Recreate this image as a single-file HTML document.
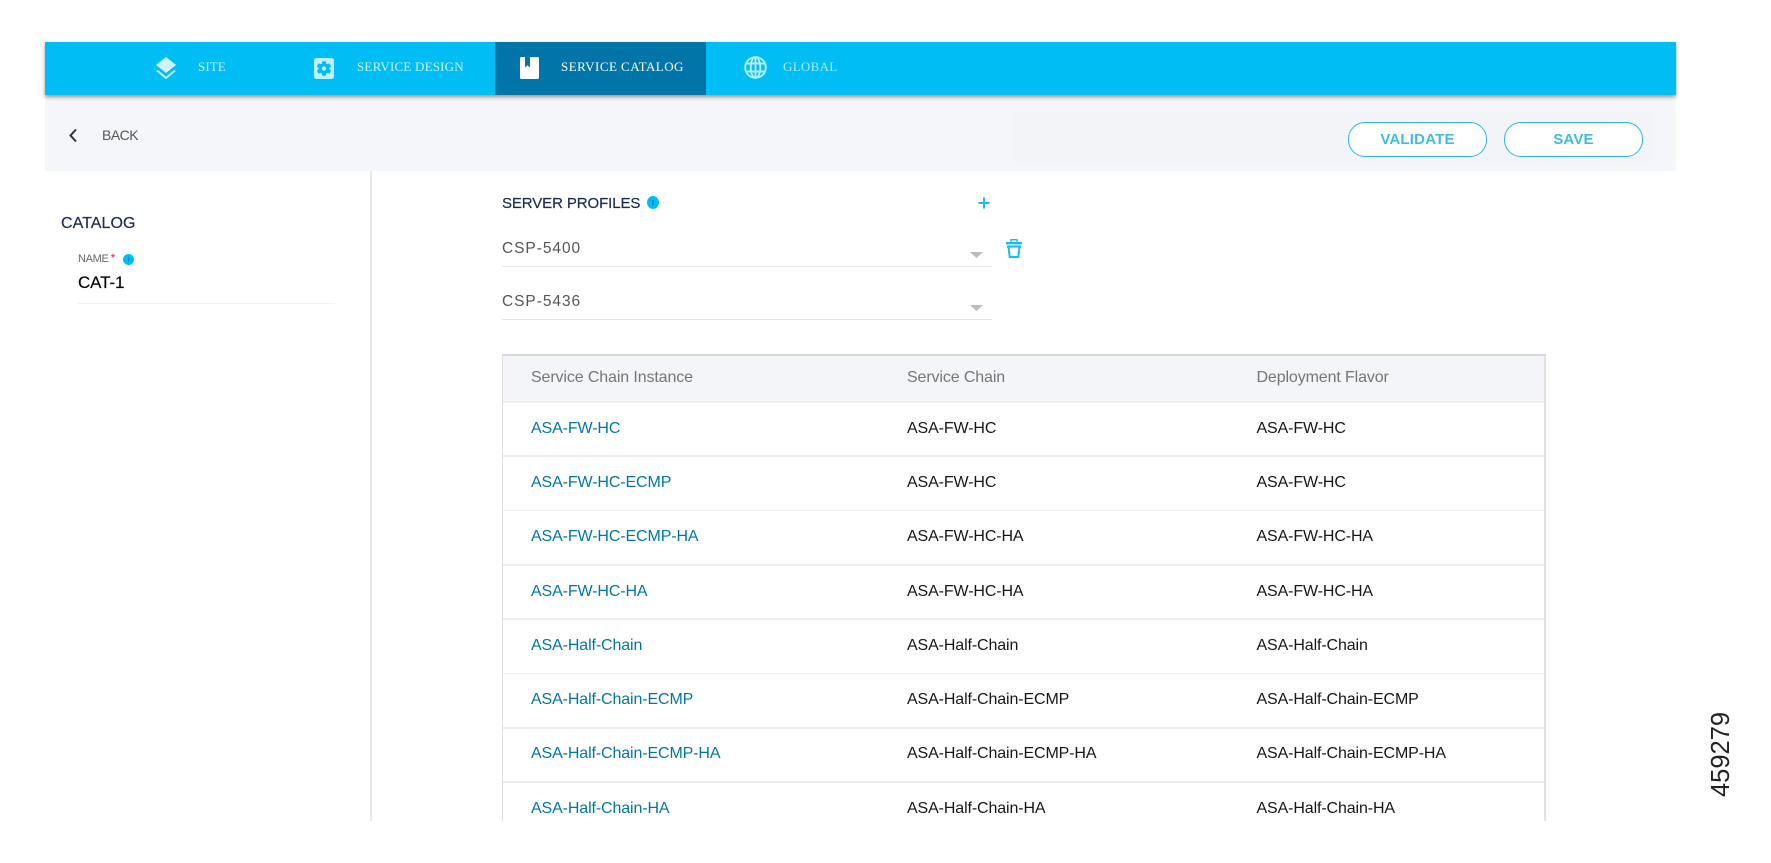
<!DOCTYPE html>
<html><head><meta charset="utf-8"><title>Service Catalog</title>
<style>
html,body{margin:0;padding:0;background:#fff}
body{width:1771px;height:863px;position:relative;overflow:hidden;font-family:"Liberation Sans",sans-serif}
.a{position:absolute;white-space:nowrap}
.b{position:absolute}
.t{height:20px;line-height:20px}
.nav{font-family:"Liberation Serif",serif;font-size:13px;color:#c8f2fd;top:57px}
.lnk{color:#0176a6}.cell{color:#161616}
.t,.hd{font-size:16px;letter-spacing:-.12px}
.hd{color:#757575;height:20px;line-height:20px;position:absolute;white-space:nowrap}
.sep{position:absolute;left:503px;width:1041px;background:#ededed}
.btn{position:absolute;top:122px;width:137px;height:33px;border:1.5px solid #2fb6de;border-radius:17px;background:#fff;color:#3fbce2;font-weight:bold;font-size:15px;line-height:33px;text-align:center;letter-spacing:.2px}
.dd{font-size:15.5px;letter-spacing:.95px;color:#555;height:20px;line-height:20px}
.dot{position:absolute;border-radius:50%;background:#00bef4}
.dot i{position:absolute;left:50%;top:50%;width:1.4px;height:5px;margin:-2.5px 0 0 -.7px;background:#0a86b8}
</style></head><body>

<div class="b" style="left:45px;top:95px;width:1631px;height:76px;background:#f4f6fa"></div>
<div class="b" style="left:1014px;top:113px;width:638px;height:49px;background:#f3f4f8"></div>
<div class="b" style="left:45px;top:42px;width:1631px;height:53px;background:#00bef4;box-shadow:0 2px 4px rgba(0,0,0,.4)"></div>
<div class="b" style="left:495px;top:42px;width:211px;height:53px;background:#0175a8"></div>

<svg class="b" style="left:155px;top:56px" width="22" height="24" viewBox="0 0 22 24"><path d="M11 1 L21 9 L11 17 L1 9Z" fill="#cdf3fd"/><path d="M2 14.5 L11 22 L20 14.5" fill="none" stroke="#cdf3fd" stroke-width="2"/></svg>
<div class="a nav" style="left:198px;letter-spacing:.1px;line-height:20px">SITE</div>

<svg class="b" style="left:314px;top:58px" width="20" height="21" viewBox="0 0 20 21"><rect width="20" height="21" rx="2.5" fill="#bff0fc"/><g fill="#00bef4"><circle cx="10" cy="10.5" r="5.4"/><rect x="8" y="3.2" width="4" height="14.6" rx="1"/><rect x="8" y="3.2" width="4" height="14.6" rx="1" transform="rotate(60 10 10.5)"/><rect x="8" y="3.2" width="4" height="14.6" rx="1" transform="rotate(120 10 10.5)"/></g><circle cx="10" cy="10.5" r="2.2" fill="#bff0fc"/></svg>
<div class="a nav" style="left:357px;letter-spacing:.2px;line-height:20px">SERVICE DESIGN</div>

<svg class="b" style="left:520px;top:57px" width="19" height="22" viewBox="0 0 19 22"><path d="M1.5 0H17.5Q19 0 19 1.5V20.5Q19 22 17.5 22H1.5Q0 22 0 20.5V1.500Q0 0 1.500 0Z" fill="#fff"/><path d="M5 0H10V10.500L7.500 8.300L5 10.500Z" fill="#0175a8"/></svg>
<div class="a nav" style="left:561px;color:#fff;letter-spacing:.46px;line-height:20px">SERVICE CATALOG</div>

<svg class="b" style="left:744px;top:56px" width="23" height="23" viewBox="0 0 23 23" fill="none" stroke="#b5edfb" stroke-width="1.900"><circle cx="11.500" cy="11.500" r="10.300"/><ellipse cx="11.500" cy="11.500" rx="4.800" ry="10.300"/><path d="M2.500 7.500H20.500M2.500 15.500H20.500M11.500 1.200V21.800"/></svg>
<div class="a nav" style="left:783px;color:#a9e9fa;letter-spacing:.3px;line-height:20px">GLOBAL</div>

<svg class="b" style="left:68px;top:128px" width="10" height="15" viewBox="0 0 10 15"><path d="M8 1.500 L2.500 7.500 L8 13.500" fill="none" stroke="#333" stroke-width="2"/></svg>
<div class="a" style="left:102px;top:125px;font-size:14px;letter-spacing:-.5px;color:#555;line-height:20px">BACK</div>

<div class="btn" style="left:1348px">VALIDATE</div>
<div class="btn" style="left:1504px">SAVE</div>

<div class="a" style="left:61px;top:214px;font-size:16px;color:#1b2c4f;line-height:20px;letter-spacing:.05px;-webkit-text-stroke:.2px #1b2c4f">CATALOG</div>
<div class="a" style="left:78px;top:250px;font-size:11px;color:#666;line-height:16px;letter-spacing:-.3px">NAME<span style="color:#e2165a;margin-left:2px;font-size:12px">*</span></div>
<div class="dot" style="left:123px;top:254px;width:11px;height:11px"><i></i></div>
<div class="a" style="left:78px;top:272px;font-size:17px;color:#000;line-height:22px;letter-spacing:-.1px;-webkit-text-stroke:.15px #000">CAT-1</div>
<div class="b" style="left:78px;top:303px;width:257px;height:1px;background:#f1f1f1"></div>

<div class="b" style="left:370px;top:171px;width:2px;height:650px;background:#e8e8e8"></div>

<div class="a" style="left:502px;top:194px;font-size:15px;color:#1b2c4f;line-height:20px;letter-spacing:-.1px;-webkit-text-stroke:.2px #1b2c4f">SERVER PROFILES</div>
<div class="dot" style="left:647px;top:196px;width:12px;height:13px"><i></i></div>
<svg class="b" style="left:978px;top:197px" width="12" height="12" viewBox="0 0 12 12"><path d="M6 0.500V11.500M0.500 6H11.500" stroke="#1cbfe8" stroke-width="2"/></svg>

<div class="a dd" style="left:502px;top:239px">CSP-5400</div>
<div class="b" style="left:502px;top:266px;width:490px;height:1px;background:#e6e6e6"></div>
<svg class="b" style="left:970px;top:252px" width="13" height="6" viewBox="0 0 13 6"><path d="M0 0H13L6.500 6Z" fill="#bcbcbc"/></svg>
<svg class="b" style="left:1006px;top:239px" width="16" height="19" viewBox="0 0 16 19" fill="none" stroke="#18bdec"><rect x="5" y="0.700" width="6" height="3" stroke-width="1.400"/><rect x="0" y="3" width="16" height="2.400" fill="#18bdec" stroke="none"/><rect x="1" y="6.400" width="14" height="2.200" fill="#18bdec" stroke="none"/><path d="M2.500 7.500L3.700 18H12.300L13.500 7.500" stroke-width="2"/></svg>

<div class="a dd" style="left:502px;top:292px">CSP-5436</div>
<div class="b" style="left:502px;top:319px;width:490px;height:1px;background:#e6e6e6"></div>
<svg class="b" style="left:970px;top:305px" width="13" height="6" viewBox="0 0 13 6"><path d="M0 0H13L6.500 6Z" fill="#bcbcbc"/></svg>

<!-- table -->
<div class="b" style="left:503px;top:355px;width:1041px;height:47px;background:#f3f5f9"></div>
<div class="b" style="left:502px;top:354px;width:1px;height:467px;background:#e0e0e0"></div>
<div class="b" style="left:1544px;top:354px;width:2px;height:467px;background:#e2e2e2"></div>
<div class="b" style="left:502px;top:354px;width:1044px;height:2px;background:#d8d8d8"></div>
<div class="sep" style="top:401px;height:2px"></div>
<div class="sep" style="top:455px;height:2px"></div>
<div class="sep" style="top:510px;height:1px"></div>
<div class="sep" style="top:564px;height:2px"></div>
<div class="sep" style="top:618px;height:2px"></div>
<div class="sep" style="top:673px;height:1px"></div>
<div class="sep" style="top:727px;height:2px"></div>
<div class="sep" style="top:781px;height:2px"></div>

<div class="hd" style="left:531px;top:368px">Service Chain Instance</div>
<div class="hd" style="left:907px;top:368px">Service Chain</div>
<div class="hd" style="left:1256.500px;top:368px">Deployment Flavor</div>

<div class="a t lnk" style="left:531px;top:419px">ASA-FW-HC</div>
<div class="a t cell" style="left:907px;top:419px">ASA-FW-HC</div>
<div class="a t cell" style="left:1256.500px;top:419px">ASA-FW-HC</div>

<div class="a t lnk" style="left:531px;top:473px">ASA-FW-HC-ECMP</div>
<div class="a t cell" style="left:907px;top:473px">ASA-FW-HC</div>
<div class="a t cell" style="left:1256.500px;top:473px">ASA-FW-HC</div>

<div class="a t lnk" style="left:531px;top:527px">ASA-FW-HC-ECMP-HA</div>
<div class="a t cell" style="left:907px;top:527px">ASA-FW-HC-HA</div>
<div class="a t cell" style="left:1256.500px;top:527px">ASA-FW-HC-HA</div>

<div class="a t lnk" style="left:531px;top:582px">ASA-FW-HC-HA</div>
<div class="a t cell" style="left:907px;top:582px">ASA-FW-HC-HA</div>
<div class="a t cell" style="left:1256.500px;top:582px">ASA-FW-HC-HA</div>

<div class="a t lnk" style="left:531px;top:636px">ASA-Half-Chain</div>
<div class="a t cell" style="left:907px;top:636px">ASA-Half-Chain</div>
<div class="a t cell" style="left:1256.500px;top:636px">ASA-Half-Chain</div>

<div class="a t lnk" style="left:531px;top:690px">ASA-Half-Chain-ECMP</div>
<div class="a t cell" style="left:907px;top:690px">ASA-Half-Chain-ECMP</div>
<div class="a t cell" style="left:1256.500px;top:690px">ASA-Half-Chain-ECMP</div>

<div class="a t lnk" style="left:531px;top:744px">ASA-Half-Chain-ECMP-HA</div>
<div class="a t cell" style="left:907px;top:744px">ASA-Half-Chain-ECMP-HA</div>
<div class="a t cell" style="left:1256.500px;top:744px">ASA-Half-Chain-ECMP-HA</div>

<div class="a t lnk" style="left:531px;top:799px">ASA-Half-Chain-HA</div>
<div class="a t cell" style="left:907px;top:799px">ASA-Half-Chain-HA</div>
<div class="a t cell" style="left:1256.500px;top:799px">ASA-Half-Chain-HA</div>

<div class="a" style="left:1721px;top:797px;font-size:25.500px;line-height:24px;color:#222;transform-origin:0 0;transform:rotate(-90deg) translateY(-12px)">459279</div>
</body></html>
